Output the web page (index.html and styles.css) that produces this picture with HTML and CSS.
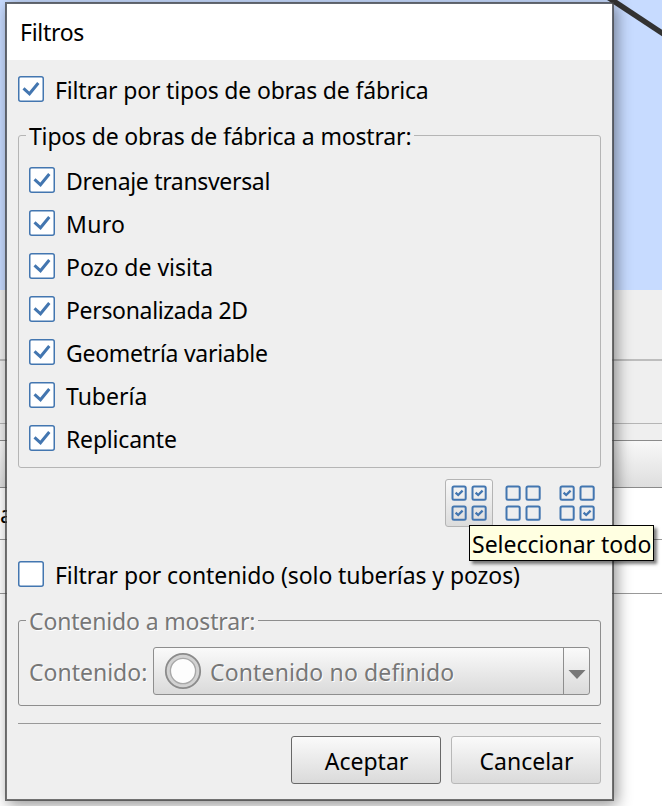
FILE: index.html
```html
<!DOCTYPE html>
<html lang="es">
<head>
<meta charset="utf-8">
<title>Filtros</title>
<link rel="stylesheet" href="styles.css">
</head>
<body>
<svg class="defs" width="0" height="0" aria-hidden="true">
  <symbol id="box" viewBox="0 0 26 26"><rect x=".75" y=".75" width="24.5" height="24.5" rx="2" fill="#fff" stroke="#4376b0" stroke-width="1.5"/></symbol>
  <symbol id="boxOn" viewBox="0 0 26 26"><use href="#box"/><path d="M5.5 12.3 11.5 17.8 20.3 7" fill="none" stroke="#4376b0" stroke-width="3"/></symbol>
  <symbol id="sq" viewBox="0 0 16 16"><rect x="1.5" y="1.5" width="13.2" height="13.2" rx="1.5" fill="none" stroke="#4376b0" stroke-width="2"/></symbol>
  <symbol id="sqOn" viewBox="0 0 16 16"><use href="#sq"/><path d="M4.6 7.6 7.2 10 11.6 5.6" fill="none" stroke="#4376b0" stroke-width="2.3"/></symbol>
</svg>
<div class="backdrop">
  <div class="canvas"><svg width="662" height="290"><path d="M603-6 672 39.6" stroke="#333" stroke-width="5.5"/></svg></div>
  <div class="strip strip-a"></div>
  <div class="strip strip-b"></div>
  <div class="strip strip-c"></div>
  <div class="head"></div>
  <div class="cell cell-a">a</div>
  <div class="cell cell-b"></div>
</div>
<main class="dialog">
  <header class="title"><span class="t-title">Filtros</span></header>
  <div class="body">
    <label class="check first"><svg><use href="#boxOn"/></svg><span class="t-types">Filtrar por tipos de obras de fábrica</span></label>
    <fieldset class="group types">
      <legend><span class="t-legend">Tipos de obras de fábrica a mostrar:</span></legend>
      <label class="check"><svg><use href="#boxOn"/></svg><span class="t-dren">Drenaje transversal</span></label>
      <label class="check"><svg><use href="#boxOn"/></svg><span class="t-muro">Muro</span></label>
      <label class="check"><svg><use href="#boxOn"/></svg><span class="t-pozo">Pozo de visita</span></label>
      <label class="check"><svg><use href="#boxOn"/></svg><span class="t-pers">Personalizada 2D</span></label>
      <label class="check"><svg><use href="#boxOn"/></svg><span class="t-geo">Geometría variable</span></label>
      <label class="check"><svg><use href="#boxOn"/></svg><span class="t-tub">Tubería</span></label>
      <label class="check"><svg><use href="#boxOn"/></svg><span class="t-rep">Replicante</span></label>
    </fieldset>
    <div class="tools">
      <button class="tool active"><svg width="36" height="36"><use href="#sqOn" width="16" height="16"/><use href="#sqOn" x="20" width="16" height="16"/><use href="#sqOn" y="20" width="16" height="16"/><use href="#sqOn" x="20" y="20" width="16" height="16"/></svg></button>
      <button class="tool"><svg width="36" height="36"><use href="#sq" width="16" height="16"/><use href="#sq" x="20" width="16" height="16"/><use href="#sq" y="20" width="16" height="16"/><use href="#sq" x="20" y="20" width="16" height="16"/></svg></button>
      <button class="tool"><svg width="36" height="36"><use href="#sqOn" width="16" height="16"/><use href="#sq" x="20" width="16" height="16"/><use href="#sq" y="20" width="16" height="16"/><use href="#sqOn" x="20" y="20" width="16" height="16"/></svg></button>
    </div>
    <label class="check second"><svg><use href="#box"/></svg><span class="t-cont">Filtrar por contenido (solo tuberías y pozos)</span></label>
    <fieldset class="group content">
      <legend><span class="t-clegend">Contenido a mostrar:</span></legend>
      <div class="row">
        <span class="name t-name">Contenido:</span>
        <div class="combo">
          <svg class="ring" width="38" height="38"><circle cx="19" cy="19" r="17.2" fill="#d2d2d2" stroke="#8b8b8b" stroke-width="1.8"/><circle cx="19" cy="19" r="12.6" fill="#fdfdfd" stroke="#a8a8a8" stroke-width="1.4"/></svg>
          <span class="value t-value">Contenido no definido</span>
          <span class="drop"><svg width="18" height="9"><path d="M.5 0H17.5L9 9Z" fill="#777"/></svg></span>
        </div>
      </div>
    </fieldset>
    <footer class="actions">
      <button class="btn default"><span class="t-ok">Aceptar</span></button>
      <button class="btn"><span class="t-cancel">Cancelar</span></button>
    </footer>
  </div>
</main>
<div class="tooltip"><span class="t-tip">Seleccionar todo</span></div>
</body>
</html>
```
FILE: styles.css
```css
* { box-sizing: border-box; }
body { margin: 0; width: 662px; height: 806px; overflow: hidden; position: relative; background: #fff; color: #000; font: 23px/30px "Noto Sans", "Open Sans", sans-serif; }
button { font: inherit; color: inherit; padding: 0; }
.defs { position: absolute; }
.canvas { height: 290px; background: #c7dbff; }
.canvas svg { display: block; }
.strip { background: #efefef; border-bottom: 1px solid #b5b5b5; }
.strip-a { height: 71px; border-bottom: 2px solid #bdbdbd; }
.strip-b { height: 63px; }
.strip-c { height: 17px; border-color: #8b8b8b; }
.head { height: 47px; background: linear-gradient(#f8f8f8, #dedede); border-bottom: 1px solid #8b8b8b; }
.cell { border-bottom: 1px solid #999; }
.cell-a { height: 52px; padding-top: 11px; }
.cell-b { height: 54px; }
.dialog { position: absolute; left: 5px; top: 2px; width: 609px; height: 799px; border: 2px solid rgba(65, 65, 65, .75); background: #efefef; background-clip: padding-box; box-shadow: 3px 4px 14px rgba(0, 0, 0, .42); }
.title { height: 56px; padding: 13px 13px; background: #fff; }
.title span, .check span, legend span, .name, .value, .btn span, .tooltip span { white-space: nowrap; }
.body { padding: 16px 11px 0; display: flex; flex-direction: column; }
.check { display: flex; align-items: flex-start; gap: 11px; height: 26px; }
.check span { margin-top: -1px; }
.check svg { width: 26px; height: 26px; flex: none; }
.group { margin: 0; min-width: 0; padding: 0 10px; border: 1px solid #b5b5b5; border-radius: 3px; }
legend { height: 29px; margin-left: -3px; padding: 0 3px; }
.types { margin-top: 19px; height: 347px; }
.types .check { margin-bottom: 17px; }
.types legend + .check { margin-top: 17px; }
.tools { display: flex; justify-content: flex-end; gap: 6px; margin: 11px 0 0; }
.tool { width: 48px; height: 48px; border: 1px solid transparent; border-radius: 3px; background: none; display: grid; place-items: center; }
.tool.active { border-color: #b4b4b4; background: linear-gradient(#f8f8f8, #dcdcdc); }
.second { margin-top: 34px; }
.content { margin-top: 19px; height: 100px; border-color: #8e8e8e; color: #777; text-shadow: 1px 1px #fff; }
.row { display: flex; align-items: center; margin-top: 12px; }
.name { width: 124px; padding-top: 2px; }
.combo { flex: 1; height: 48px; display: flex; align-items: center; border: 1px solid #8e8e8e; border-radius: 3px; background: linear-gradient(#fafafa, #dadada); }
.ring { margin-left: 10px; }
.value { margin-left: 8px; padding-top: 2px; flex: 1; }
.drop { width: 26px; height: 46px; border-left: 1px solid #8e8e8e; display: grid; justify-items: center; align-items: start; padding-top: 22px; padding-left: 1px; }
.actions { display: flex; justify-content: flex-end; gap: 10px; margin-top: 17px; padding-top: 12px; border-top: 1px solid #999; }
.btn { width: 150px; height: 48px; padding: 2px 0 0 1px; border: 1px solid #b8b8b8; border-radius: 3px; background: linear-gradient(#fafafa, #dadada); }
.btn.default { border-color: #686868; }
.tooltip { position: absolute; left: 469px; top: 525px; width: 185px; height: 36px; padding: 3px 2px; border: 1px solid #000; background: #ffffe1; box-shadow: 3px 3px 3px rgba(0, 0, 0, .5); }
.t-title { letter-spacing: -.3px; }
.t-types, .t-legend { letter-spacing: -.17px; }
.t-dren, .t-pers { letter-spacing: -.33px; }
.t-muro { letter-spacing: .3px; }
.t-geo { letter-spacing: -.28px; }
.t-rep { letter-spacing: -.2px; }
.t-cont { letter-spacing: -.08px; }
.t-clegend { letter-spacing: -.15px; }
.t-value { letter-spacing: .14px; }
```
